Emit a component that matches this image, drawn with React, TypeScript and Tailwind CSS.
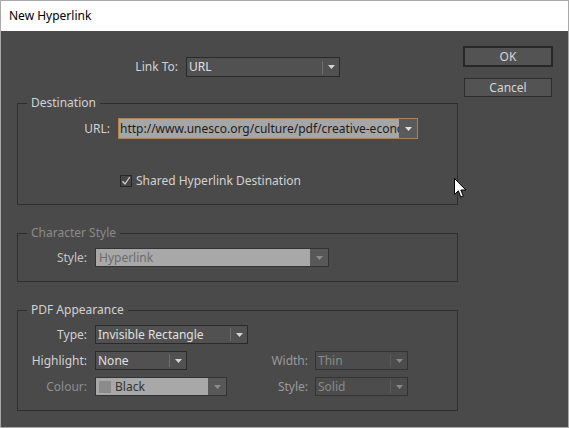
import React from "react";

type V = "on" | "light" | "dim";

function Tri({ color }: { color: string }) {
  return (
    <svg width="7" height="4" viewBox="0 0 7 4">
      <path d="M0 0H7L3.5 4Z" fill={color} />
    </svg>
  );
}

function Select({
  w,
  h = "h-[19px]",
  text,
  v,
  swatch,
}: {
  w: string;
  h?: string;
  text: string;
  v: V;
  swatch?: boolean;
}) {
  if (v === "light") {
    return (
      <div className={`${w} ${h} flex border border-[#333333] bg-[#a8a8a8]`}>
        <div className="flex-1 flex items-center pl-[3px] text-[#6c6c6c] overflow-hidden whitespace-nowrap">
          {swatch && <span className="w-[12px] h-[12px] bg-[#8b8b8b] mr-[4px] shrink-0" />}
          <span className={swatch ? "text-[#333333]" : ""}>{text}</span>
        </div>
        <div className="w-[18px] bg-[#585858] flex items-center justify-center">
          <Tri color="#8c8c8c" />
        </div>
      </div>
    );
  }
  const on = v === "on";
  return (
    <div
      className={`${w} ${h} flex border ${
        on ? "border-[#2a2a2a] bg-[#515151] text-[#e0e0e0]" : "border-[#333333] bg-[#4c4c4c] text-[#8a8a8a]"
      }`}
    >
      <div className="flex-1 flex items-center pl-[2px] whitespace-nowrap overflow-hidden">{text}</div>
      <div className="flex items-center">
        <div className={`w-px h-[13px] ${on ? "bg-[#6e6e6e]" : "bg-[#5a5a5a]"}`} />
        <div className="w-[16px] flex items-center justify-center">
          <Tri color={on ? "#d6d6d6" : "#8a8a8a"} />
        </div>
      </div>
    </div>
  );
}

export default function App() {
  return (
    <div className="relative w-[569px] h-[428px] border border-[#a9a9a9] bg-[#4a4a4a] flex flex-col font-['Noto_Sans',sans-serif] text-[12px] text-[#d2d2d2] overflow-hidden">
      <div className="h-[30px] bg-white flex items-center pl-[8px] text-black">New Hyperlink</div>
      <div className="flex-1 flex">
        <div className="pl-[16px] flex flex-col">
          <div className="mt-[26px] h-[20px] flex items-center">
            <div className="w-[169px] text-right pr-[8px]">Link To:</div>
            <Select w="w-[154px]" h="h-[20px]" text="URL" v="on" />
          </div>

          <fieldset className="mt-[18px] w-[441px] border border-[#2e2e2e] pb-[17px]">
            <legend className="ml-[9px] px-[4px] leading-[16px]">Destination</legend>
            <div className="mt-[7px] flex items-center h-[21px]">
              <div className="w-[92px] text-right">URL:</div>
              <div className="ml-[8px] w-[300px] h-[21px] flex border border-[#c57c33]">
                <div className="flex-1 flex items-center pl-[2px] bg-[#a6a6a6] text-[#1c1c1c] whitespace-nowrap overflow-hidden">
                  <span className="w-px h-[13px] bg-[#3a4a8a] -mr-px" />
                  http://www.unesco.org/culture/pdf/creative-economy-report-2013.pdf
                </div>
                <div className="w-[18px] bg-[#5a5a5a] flex items-center justify-center">
                  <Tri color="#e2e2e2" />
                </div>
              </div>
            </div>
            <div className="mt-[35px] h-[13px] flex items-center">
              <div className="ml-[102px] w-[12px] h-[12px] border border-[#262626] bg-[#464646] flex items-center justify-center">
                <svg width="10" height="10" viewBox="0 0 10 10">
                  <path d="M1.5 5.2L4 8L8.8 1" fill="none" stroke="#cfcfcf" strokeWidth="1.3" />
                </svg>
              </div>
              <span className="ml-[4px]">Shared Hyperlink Destination</span>
            </div>
          </fieldset>

          <fieldset className="mt-[20px] w-[441px] border border-[#2e2e2e] pb-[14px]">
            <legend className="ml-[9px] px-[4px] leading-[16px] text-[#8a8a8a]">Character Style</legend>
            <div className="mt-[7px] flex items-center h-[19px]">
              <div className="w-[69px] text-right text-[#c4c4c4]">Style:</div>
              <div className="ml-[8px]">
                <Select w="w-[234px]" text="Hyperlink" v="light" />
              </div>
            </div>
          </fieldset>

          <fieldset className="mt-[20px] w-[441px] border border-[#2e2e2e] pb-[14px]">
            <legend className="ml-[9px] px-[4px] leading-[16px]">PDF Appearance</legend>
            <div className="mt-[7px] flex items-center h-[19px]">
              <div className="w-[69px] text-right">Type:</div>
              <div className="ml-[8px]">
                <Select w="w-[153px]" text="Invisible Rectangle" v="on" />
              </div>
            </div>
            <div className="mt-[7px] flex items-center h-[19px] pr-[49px]">
              <div className="w-[69px] text-right">Highlight:</div>
              <div className="ml-[8px]">
                <Select w="w-[92px]" text="None" v="on" />
              </div>
              <div className="flex-1 text-right text-[#9a9a9a]">Width:</div>
              <div className="ml-[7px]">
                <Select w="w-[93px]" text="Thin" v="dim" />
              </div>
            </div>
            <div className="mt-[7px] flex items-center h-[19px] pr-[49px]">
              <div className="w-[69px] text-right text-[#8e8e8e]">Colour:</div>
              <div className="ml-[8px]">
                <Select w="w-[132px]" text="Black" v="light" swatch />
              </div>
              <div className="flex-1 text-right text-[#9a9a9a]">Style:</div>
              <div className="ml-[7px]">
                <Select w="w-[93px]" text="Solid" v="dim" />
              </div>
            </div>
          </fieldset>
        </div>

        <div className="ml-[5px] pt-[15px] flex flex-col">
          <button className="w-[90px] h-[21px] border-2 border-[#272727] bg-[#535353] text-[#d6d6d6] flex items-center justify-center leading-none">
            OK
          </button>
          <button className="mt-[11px] ml-[1px] w-[88px] h-[19px] border border-[#2e2e2e] bg-[#535353] text-[#d6d6d6] flex items-center justify-center leading-none">
            Cancel
          </button>
        </div>
      </div>

      <svg className="absolute left-[453px] top-[177px]" width="13" height="21" viewBox="0 0 13 21">
        <path d="M0.5 0.5V16.5L4.3 12.8L6.8 19L9.3 18L6.8 12H11.8Z" fill="#ffffff" stroke="#000000" strokeWidth="1" strokeLinejoin="miter" />
      </svg>
    </div>
  );
}
